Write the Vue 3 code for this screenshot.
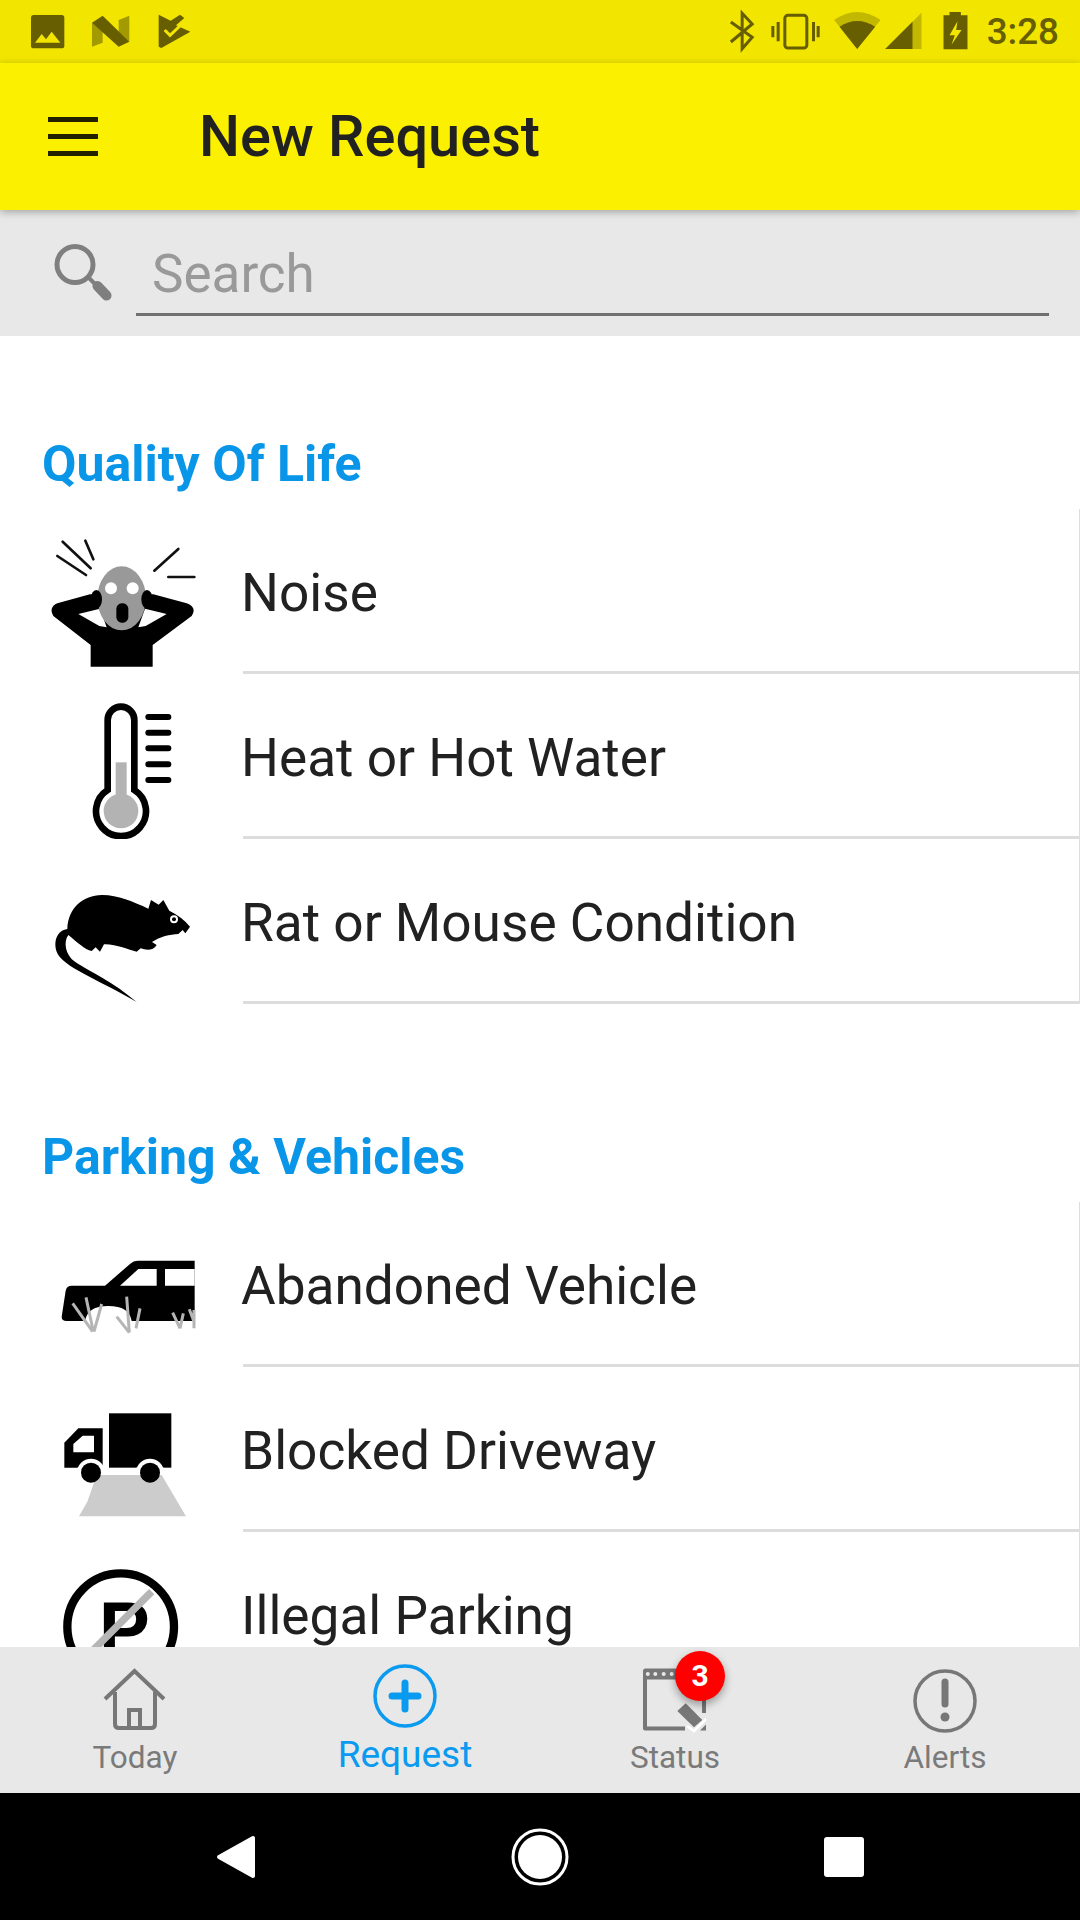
<template>
  <div class="screen">
    <div class="status-bar">
      <svg class="status-left" viewBox="0 0 720 189">
        <rect x="93" y="45" width="100" height="100" rx="8" fill="#665e00" />
        <path d="M105 128 L125 102 L138 118 L155 95 L181 128 Z" fill="#f2e600" />
        <path d="M276 68 L308 88 V128 L276 140 Z" fill="#a39a00" />
        <path d="M356 95 V60 L388 47 V125 Z" fill="#a39a00" />
        <path d="M276 68 L308 47 L388 125 L356 140 Z" fill="#665e00" />
        <path d="M476 44 L512 62 L540 44 L553 54 L528 76 L571 95 L484 144 L476 140 Z" fill="#665e00" />
        <path d="M494 90 L510 106 L546 72" fill="none" stroke="#f2e600" stroke-width="9" />
      </svg>
      <div class="status-right">
        <svg class="status-icons" viewBox="60 0 800 189">
          <path d="M92 66 L156 112 L126 146 V40 L156 72 L92 126" fill="none" stroke="#665e00" stroke-width="9" />
          <rect x="254" y="46" width="66" height="98" rx="9" fill="none" stroke="#665e00" stroke-width="9" />
          <path d="M218 78 V112 M234 66 V124 M340 66 V124 M354 78 V112" stroke="#665e00" stroke-width="9" fill="none" />
          <path d="M402 60 Q471 12 541 60 L471 147 Z" fill="#c2b800" />
          <path d="M418 80 Q471 46 525 80 L471 147 Z" fill="#665e00" />
          <path d="M555 147 L664 38 V147 Z" fill="#c2b800" />
          <path d="M555 147 L637 65 V147 Z" fill="#665e00" />
          <path d="M748 36 H782 V46 H802 V148 H730 V46 H748 Z" fill="#665e00" />
          <path d="M772 64 L748 106 H764 L754 134 L784 90 H768 Z" fill="#f2e600" />
        </svg>
        <span class="clock">3:28</span>
      </div>
    </div>

    <header class="app-bar">
      <div class="menu-icon">
        <span></span>
        <span></span>
        <span></span>
      </div>
      <h1 class="title">New Request</h1>
    </header>

    <div class="search-bar">
      <svg class="search-icon" viewBox="0 0 60 60">
        <circle cx="22" cy="21.5" r="18" fill="none" stroke="#7f7f7f" stroke-width="5" />
        <path d="M35 34 L42 41" stroke="#7f7f7f" stroke-width="4" />
        <path d="M44.5 43 L53.5 52.5" stroke="#7f7f7f" stroke-width="10" stroke-linecap="round" />
      </svg>
      <div class="search-input">Search</div>
    </div>

    <main class="list">
      <section v-for="section in sections" :key="section.title" class="section">
        <h2 class="section-title">{{ section.title }}</h2>
        <div v-for="row in section.rows" :key="row.label" class="row">
          <svg class="row-icon" :viewBox="`0 ${row.top} 729 495`">
            <g v-if="row.icon === 'noise'">
              <path d="M172 168 L258 225 M188 125 L272 205 M256 122 L280 178 M535 147 L463 212 M505 231 H583" stroke="#111" stroke-width="8" stroke-linecap="round" fill="none" />
              <path d="M270 283 L172 310 Q145 322 160 348 L272 435 V500 H458 V435 L575 348 Q592 322 560 310 L460 283 Z" fill="#000" />
              <path d="M235 342 L300 326 L320 382 L298 378 Z M500 342 L435 326 L415 382 L437 378 Z" fill="#fff" />
              <ellipse cx="365" cy="295" rx="73" ry="96" fill="#999" />
              <ellipse cx="289" cy="298" rx="17" ry="28" fill="#000" />
              <ellipse cx="441" cy="298" rx="17" ry="28" fill="#000" />
              <circle cx="333" cy="265" r="18" fill="#fff" />
              <circle cx="398" cy="265" r="18" fill="#fff" />
              <rect x="349" y="310" width="36" height="58" rx="16" fill="#000" />
            </g>
            <g v-else-if="row.icon === 'heat'">
              <circle cx="363" cy="933" r="52" fill="#b3b3b3" />
              <rect x="347" y="787" width="33" height="110" fill="#b3b3b3" />
              <path d="M323 870 V660 A40 40 0 0 1 403 660 V870 A75 75 0 1 1 323 870 Z" fill="none" stroke="#000" stroke-width="20" />
              <path d="M445 651 H505 M445 698 H505 M445 745 H505 M445 793 H505 M445 840 H505" stroke="#000" stroke-width="18" stroke-linecap="round" />
            </g>
            <g v-else-if="row.icon === 'rat'">
              <path d="M570 1280 Q548 1252 508 1232 L490 1200 L476 1214 L453 1200 L445 1226 C400 1205 350 1184 305 1185 C250 1188 205 1220 202 1287 C170 1292 160 1325 170 1355 C185 1400 300 1440 410 1506 C340 1445 270 1415 225 1385 C195 1365 190 1325 205 1305 C230 1325 255 1350 275 1353 L287 1342 L300 1355 L312 1333 C350 1332 385 1350 410 1355 L422 1345 C440 1352 460 1352 470 1335 L456 1326 C480 1310 510 1303 535 1302 L548 1290 L556 1300 Z" fill="#000" />
              <circle cx="522" cy="1258" r="12" fill="#fff" />
              <circle cx="522" cy="1258" r="6" fill="#000" />
            </g>
            <g v-else-if="row.icon === 'car'">
              <path d="M584 122 H415 Q400 122 390 132 L315 197 H215 Q200 197 197 212 L185 290 Q185 303 200 303 H255 Q262 258 325 258 Q388 258 395 303 H584 Z" fill="#000" />
              <path d="M360 197 L415 147 H470 V197 Z M495 147 H584 V197 H495 Z" fill="#fff" />
              <path d="M218 250 L278 335 M258 232 L280 335 M305 252 L282 335 M350 290 L388 338 M380 230 L388 338 M420 265 L408 325 M518 278 L540 325 M550 280 L540 325 M568 268 L582 305 M582 270 V325" stroke="#b5b5b5" stroke-width="9" fill="none" />
            </g>
            <g v-else-if="row.icon === 'truck'">
              <rect x="327" y="580" width="187" height="163" fill="#000" />
              <path d="M193 743 V668 L235 625 H308 V743 Z" fill="#000" />
              <path d="M220 697 V672 L248 647 H282 V697 Z" fill="#fff" />
              <path d="M231 758 A42 42 0 0 1 315 758 Z M408 758 A42 42 0 0 1 492 758 Z" fill="#fff" />
              <path d="M231 743 H327 V765 H231 Z M408 743 H492 V765 H408 Z" fill="#fff" />
              <path d="M290 765 H485 L558 889 H237 L262 845 Z" fill="#ccc" />
              <circle cx="273" cy="758" r="30" fill="#000" />
              <circle cx="450" cy="758" r="30" fill="#000" />
            </g>
            <g v-else-if="row.icon === 'parking'">
              <circle cx="362" cy="1220" r="160" fill="none" stroke="#000" stroke-width="25" />
              <text x="296" y="1305" class="parking-p">P</text>
              <path d="M455 1115 L275 1295" stroke="#b5b5b5" stroke-width="22" />
            </g>
          </svg>
          <div class="row-label">{{ row.label }}</div>
        </div>
      </section>
    </main>

    <nav class="tab-bar">
      <div v-for="tab in tabs" :key="tab.label" class="tab" :class="{ active: tab.active }">
        <div class="tab-icon">
          <svg v-if="tab.label === 'Today'" viewBox="0 0 70 70" fill="none" stroke="#777" stroke-width="4">
            <path d="M5 33 L34.5 5 L64 33" />
            <path d="M15 26 V58 Q15 62 19 62 H51 Q55 62 55 58 V26 M29 62 V44 H40 V62" />
          </svg>
          <svg v-else-if="tab.label === 'Request'" viewBox="0 0 70 70" fill="none">
            <circle cx="35" cy="35" r="30" stroke="#0a9bf0" stroke-width="3.5" />
            <path d="M35 22 V48 M22 35 H48" stroke="#0a9bf0" stroke-width="7" stroke-linecap="round" />
          </svg>
          <svg v-else-if="tab.label === 'Status'" viewBox="0 0 70 70" fill="none">
            <path d="M5 2.5 H64 Q66 2.5 66 5 V47 H62 V13.5 H7 V60.5 H45 V64.5 H5 Q3 64.5 3 62.5 V5 Q3 2.5 5 2.5 Z" fill="#777" />
            <circle cx="7.8" cy="8" r="2" fill="#e8e8e8" />
            <circle cx="15.3" cy="8" r="2" fill="#e8e8e8" />
            <circle cx="23.7" cy="8" r="2" fill="#e8e8e8" />
            <circle cx="31.7" cy="8" r="2" fill="#e8e8e8" />
            <path d="M37.3 45 L45.7 37.3 L62.3 54 L54 61.3 Z" fill="#777" />
            <path d="M47 60 L54 65 L66 53" stroke="#fff" stroke-width="2.5" />
            <path d="M60 64.5 L66 58.5 V64.5 Z" fill="#777" />
          </svg>
          <svg v-else viewBox="0 0 70 70" fill="none">
            <circle cx="35" cy="35" r="30" stroke="#777" stroke-width="3.5" />
            <path d="M35 16 V38" stroke="#777" stroke-width="7" stroke-linecap="round" />
            <circle cx="35" cy="51" r="4.5" fill="#777" />
          </svg>
          <span v-if="tab.badge" class="badge">{{ tab.badge }}</span>
        </div>
        <span class="tab-label">{{ tab.label }}</span>
      </div>
    </nav>

    <div class="nav-bar">
      <svg class="nav-icon" viewBox="0 0 80 60">
        <path d="M58 11 V49 L24 30 Z" fill="#fff" stroke="#fff" stroke-width="4" stroke-linejoin="round" />
      </svg>
      <svg class="nav-icon" viewBox="0 0 60 60">
        <circle cx="30" cy="30" r="27" fill="none" stroke="#fff" stroke-width="3" />
        <circle cx="30" cy="30" r="22" fill="#fff" />
      </svg>
      <div class="nav-square"></div>
    </div>
  </div>
</template>

<script setup>
const sections = [
  {
    title: 'Quality Of Life',
    rows: [
      { label: 'Noise', icon: 'noise', top: 27 },
      { label: 'Heat or Hot Water', icon: 'heat', top: 522 },
      { label: 'Rat or Mouse Condition', icon: 'rat', top: 1017 },
    ],
  },
  {
    title: 'Parking & Vehicles',
    rows: [
      { label: 'Abandoned Vehicle', icon: 'car', top: -54 },
      { label: 'Blocked Driveway', icon: 'truck', top: 441 },
      { label: 'Illegal Parking', icon: 'parking', top: 936 },
    ],
  },
]

const tabs = [
  { label: 'Today' },
  { label: 'Request', active: true },
  { label: 'Status', badge: 3 },
  { label: 'Alerts' },
]
</script>

<style scoped>
.screen {
  width: 1080px;
  height: 1920px;
  display: flex;
  flex-direction: column;
  overflow: hidden;
  background: #fff;
  font-family: Roboto, sans-serif;
  color: #212121;
}

.status-bar {
  height: 63px;
  flex: none;
  background: #f2e600;
  display: flex;
  justify-content: space-between;
}

.status-left {
  width: 240px;
  height: 63px;
}

.status-right {
  display: flex;
  align-items: center;
}

.status-icons {
  width: 267px;
  height: 63px;
}

.clock {
  font-size: 36.75px;
  font-weight: 500;
  color: #665e00;
  margin-right: 21px;
}

.app-bar {
  height: 147px;
  flex: none;
  background: #faf000;
  display: flex;
  align-items: center;
  box-shadow: 0 2px 8px rgba(0, 0, 0, 0.3);
  position: relative;
  z-index: 2;
}

.menu-icon {
  margin-left: 48px;
  width: 50px;
  display: flex;
  flex-direction: column;
  gap: 12px;
}

.menu-icon span {
  height: 5px;
  background: #212100;
}

.title {
  margin: 0 0 2px 101px;
  font-size: 57.75px;
  font-weight: 500;
  color: #212121;
}

.search-bar {
  height: 126px;
  flex: none;
  background: #e8e8e8;
  display: flex;
  align-items: flex-start;
}

.search-icon {
  width: 60px;
  height: 60px;
  margin: 33px 0 0 53px;
  flex: none;
}

.search-input {
  margin: 30px 31px 0 23px;
  flex: 1;
  height: 73px;
  padding-left: 16px;
  border-bottom: 3px solid #707070;
  font-size: 53px;
  line-height: 68px;
  color: #999;
}

.list {
  flex: 1;
  min-height: 0;
  overflow: hidden;
  padding-top: 85px;
}

.section + .section {
  margin-top: 110px;
}

.section-title {
  margin: 0;
  height: 88px;
  line-height: 86px;
  padding-left: 42px;
  font-size: 50px;
  font-weight: 700;
  color: #0a96e8;
}

.row {
  height: 165px;
  display: flex;
  align-items: center;
  box-sizing: border-box;
  border-right: 1px solid #ddd;
}

.row-icon {
  width: 243px;
  height: 165px;
  flex: none;
}

.row-label {
  flex: 1;
  height: 165px;
  box-sizing: border-box;
  border-bottom: 3px solid #ddd;
  display: flex;
  align-items: center;
  padding-top: 6px;
  text-indent: -2px;
  font-size: 53.2px;
  color: #212121;
}

.parking-p {
  font-family: "Liberation Sans", sans-serif;
  font-weight: 700;
  font-size: 230px;
  fill: #000;
}

.tab-bar {
  height: 146px;
  flex: none;
  background: #e8e8e8;
  display: flex;
}

.tab {
  flex: 1;
  display: flex;
  flex-direction: column;
  align-items: center;
  padding-top: 19px;
  color: #7a7a7a;
}

.tab-icon {
  width: 70px;
  height: 70px;
  position: relative;
}

.tab-icon svg {
  width: 70px;
  height: 70px;
  display: block;
}

.tab-label {
  font-size: 31.5px;
  margin-top: 3px;
}

.tab.active {
  padding-top: 14px;
  color: #0a9bf0;
}

.tab.active .tab-label {
  font-size: 37px;
  margin-top: 2px;
}

.badge {
  position: absolute;
  left: 35px;
  top: -15px;
  width: 50px;
  height: 50px;
  border-radius: 50%;
  background: #f00;
  color: #fff;
  font-size: 30px;
  font-weight: 700;
  line-height: 50px;
  text-align: center;
  box-shadow: 0 4px 8px rgba(0, 0, 0, 0.35);
}

.nav-bar {
  height: 127px;
  flex: none;
  background: #000;
  display: flex;
  align-items: center;
}

.nav-icon {
  flex: none;
}

.nav-icon:nth-child(1) {
  width: 80px;
  height: 60px;
  margin-left: 195px;
}

.nav-icon:nth-child(2) {
  width: 60px;
  height: 60px;
  margin-left: 235px;
}

.nav-square {
  width: 40px;
  height: 40px;
  margin-left: 254px;
  background: #fff;
  border-radius: 3px;
}
</style>
